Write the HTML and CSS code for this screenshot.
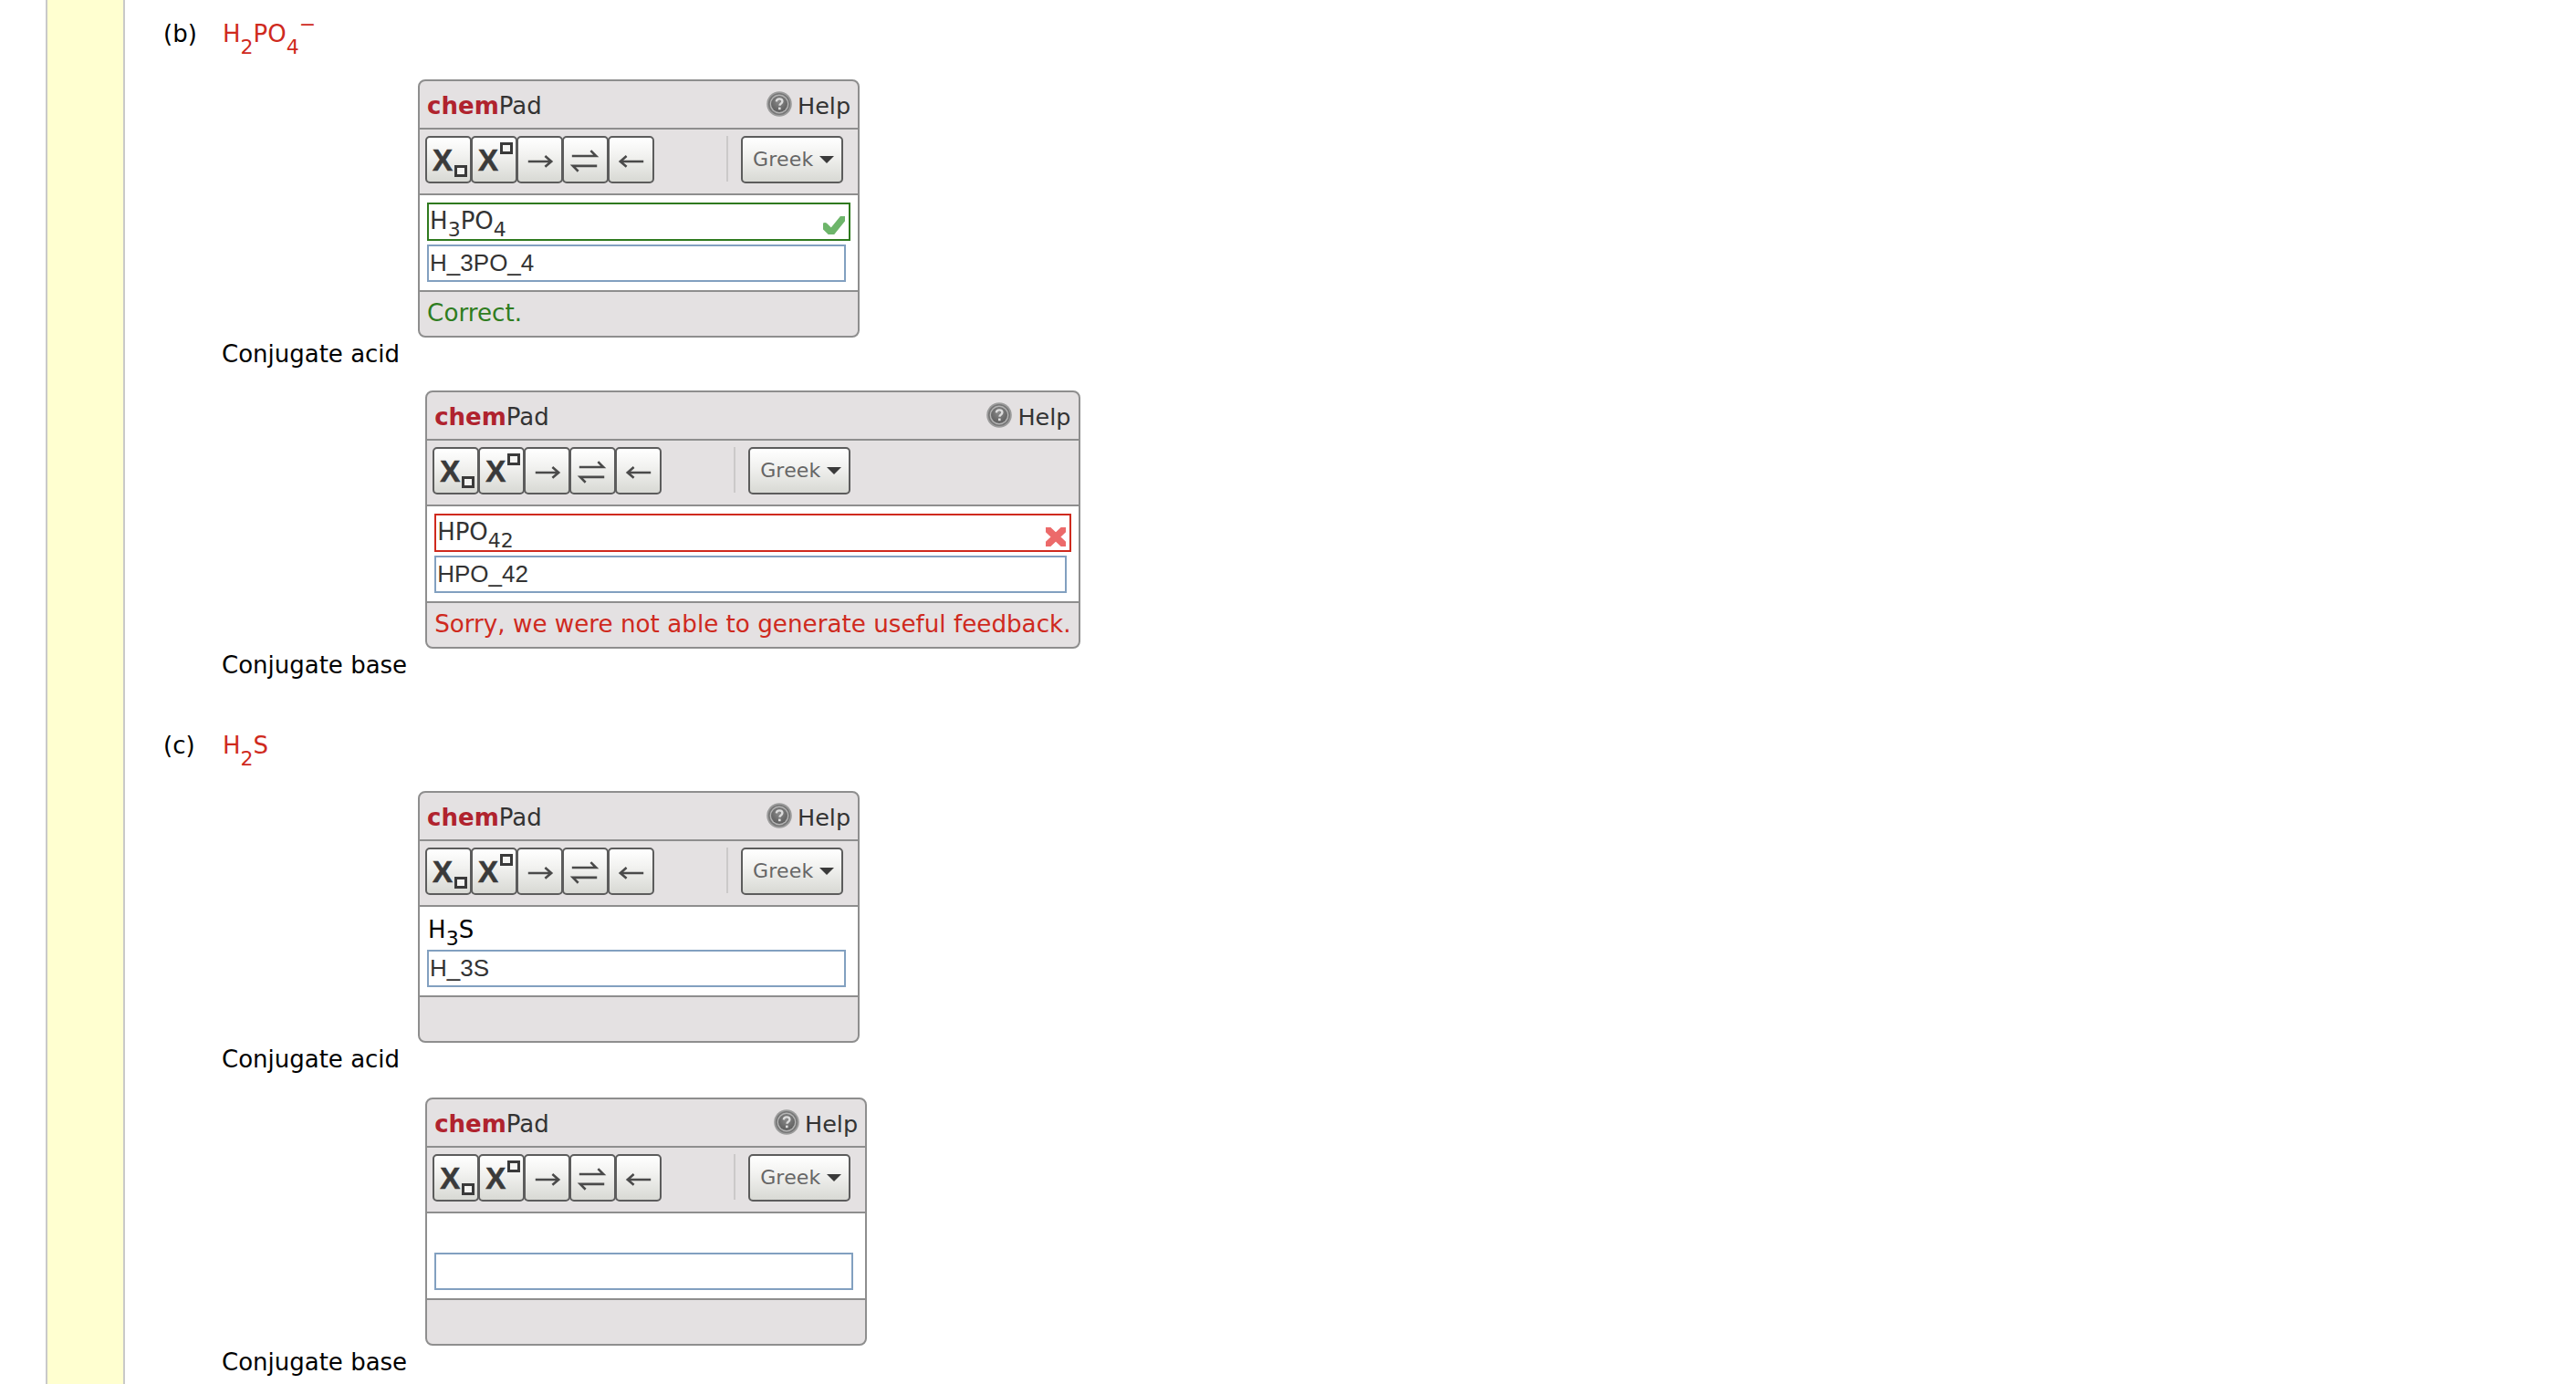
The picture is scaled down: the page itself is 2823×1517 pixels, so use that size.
FILE: index.html
```html
<!DOCTYPE html>
<html lang="en">
<head>
<meta charset="utf-8">
<title>chemPad</title>
<link rel="stylesheet" href="styles.css">
</head>
<body>
<svg class="defs" width="0" height="0" aria-hidden="true">
  <defs>
    <radialGradient id="helpFill" cx="50%" cy="35%" r="70%">
      <stop offset="0" stop-color="#8a8a8a"/>
      <stop offset="1" stop-color="#5a5a5a"/>
    </radialGradient>
    <filter id="soft" x="-10%" y="-10%" width="120%" height="120%">
      <feGaussianBlur stdDeviation="0.6"/>
    </filter>
    <symbol id="help" viewBox="0 0 28 28">
      <g filter="url(#soft)">
        <circle cx="14" cy="14" r="13.800" fill="#9c9c9c"/>
        <circle cx="14" cy="14" r="12" fill="#777"/>
        <circle cx="14" cy="14" r="10.400" fill="#b4b4b4"/>
        <circle cx="14" cy="14" r="9" fill="url(#helpFill)"/>
        <path d="M10.800 11.400c.2-2 1.500-3 3.400-3 1.900 0 3.200 1.100 3.200 2.700 0 1.300-.8 2-1.700 2.600-.8.5-1.200 1-1.200 2" fill="none" stroke="#dcdcdc" stroke-width="2.400"/>
        <rect x="13" y="17.600" width="2.600" height="2.600" fill="#dcdcdc"/>
      </g>
    </symbol>
    <symbol id="right" viewBox="0 0 48 48">
      <path d="M11 26h26M30 20l7 6-7 6" fill="none" stroke="#4a4a4a" stroke-width="2.600"/>
    </symbol>
    <symbol id="left" viewBox="0 0 48 48">
      <path d="M38 26H12M19 20l-7 6 7 6" fill="none" stroke="#4a4a4a" stroke-width="2.600"/>
    </symbol>
    <symbol id="both" viewBox="0 0 48 48">
      <path d="M9 20h27l-6-6M37 31H10l6 6" fill="none" stroke="#4a4a4a" stroke-width="2.600"/>
    </symbol>
    <symbol id="check" viewBox="0 0 30 26">
      <path d="M5 14l7 7L25 5" fill="none" stroke="#6db56a" stroke-width="7.500" stroke-linecap="round" filter="url(#soft)"/>
    </symbol>
    <symbol id="cross" viewBox="0 0 30 27">
      <path d="M6 5l18 17M24 5L6 22" fill="none" stroke="#ec6a6a" stroke-width="7.500" stroke-linecap="round" filter="url(#soft)"/>
    </symbol>
  </defs>
</svg>
<div class="page">
  <div class="margin-bar"></div>
  <main class="content">

    <section class="part part-b">
      <div class="part-head">
        <span class="part-tag">(b)</span>
        <span class="formula">H<span class="sub">2</span>PO<span class="sub">4</span><span class="sup">−</span></span>
      </div>

      <div class="answer">
        <span class="answer-label">Conjugate acid</span>
        <div class="pad">
          <div class="pad-head"><span class="brand"><b>chem</b>Pad</span><span class="help"><svg class="help-icon"><use href="#help"/></svg>Help</span></div>
          <div class="pad-tools">
            <button class="tool"><span class="tool-x">X</span><span class="box box-low"></span></button><button class="tool"><span class="tool-x">X</span><span class="box box-high"></span></button><button class="tool"><svg class="arrow"><use href="#right"/></svg></button><button class="tool"><svg class="arrow"><use href="#both"/></svg></button><button class="tool"><svg class="arrow"><use href="#left"/></svg></button>
            <span class="divider"></span>
            <button class="greek">Greek<span class="caret"></span></button>
          </div>
          <div class="pad-body">
            <div class="preview preview-ok">H<span class="sub-s">3</span>PO<span class="sub-s">4</span><svg class="mark mark-ok"><use href="#check"/></svg></div>
            <input class="entry" value="H_3PO_4">
          </div>
          <div class="pad-foot foot-ok">Correct.</div>
        </div>
      </div>

      <div class="answer answer-next">
        <span class="answer-label">Conjugate base</span>
        <div class="pad">
          <div class="pad-head"><span class="brand"><b>chem</b>Pad</span><span class="help"><svg class="help-icon"><use href="#help"/></svg>Help</span></div>
          <div class="pad-tools">
            <button class="tool"><span class="tool-x">X</span><span class="box box-low"></span></button><button class="tool"><span class="tool-x">X</span><span class="box box-high"></span></button><button class="tool"><svg class="arrow"><use href="#right"/></svg></button><button class="tool"><svg class="arrow"><use href="#both"/></svg></button><button class="tool"><svg class="arrow"><use href="#left"/></svg></button>
            <span class="divider"></span>
            <button class="greek">Greek<span class="caret"></span></button>
          </div>
          <div class="pad-body">
            <div class="preview preview-bad">HPO<span class="sub-s">42</span><svg class="mark mark-bad"><use href="#cross"/></svg></div>
            <input class="entry" value="HPO_42">
          </div>
          <div class="pad-foot foot-bad">Sorry, we were not able to generate useful feedback.</div>
        </div>
      </div>
    </section>

    <section class="part part-c">
      <div class="part-head">
        <span class="part-tag">(c)</span>
        <span class="formula">H<span class="sub">2</span>S</span>
      </div>

      <div class="answer">
        <span class="answer-label">Conjugate acid</span>
        <div class="pad">
          <div class="pad-head"><span class="brand"><b>chem</b>Pad</span><span class="help"><svg class="help-icon"><use href="#help"/></svg>Help</span></div>
          <div class="pad-tools">
            <button class="tool"><span class="tool-x">X</span><span class="box box-low"></span></button><button class="tool"><span class="tool-x">X</span><span class="box box-high"></span></button><button class="tool"><svg class="arrow"><use href="#right"/></svg></button><button class="tool"><svg class="arrow"><use href="#both"/></svg></button><button class="tool"><svg class="arrow"><use href="#left"/></svg></button>
            <span class="divider"></span>
            <button class="greek">Greek<span class="caret"></span></button>
          </div>
          <div class="pad-body">
            <div class="preview preview-plain">H<span class="sub-s">3</span>S</div>
            <input class="entry" value="H_3S">
          </div>
          <div class="pad-foot"></div>
        </div>
      </div>

      <div class="answer answer-last">
        <span class="answer-label">Conjugate base</span>
        <div class="pad">
          <div class="pad-head"><span class="brand"><b>chem</b>Pad</span><span class="help"><svg class="help-icon"><use href="#help"/></svg>Help</span></div>
          <div class="pad-tools">
            <button class="tool"><span class="tool-x">X</span><span class="box box-low"></span></button><button class="tool"><span class="tool-x">X</span><span class="box box-high"></span></button><button class="tool"><svg class="arrow"><use href="#right"/></svg></button><button class="tool"><svg class="arrow"><use href="#both"/></svg></button><button class="tool"><svg class="arrow"><use href="#left"/></svg></button>
            <span class="divider"></span>
            <button class="greek">Greek<span class="caret"></span></button>
          </div>
          <div class="pad-body">
            <div class="preview preview-empty"></div>
            <input class="entry" value="">
          </div>
          <div class="pad-foot"></div>
        </div>
      </div>
    </section>

  </main>
</div>
</body>
</html>
```

FILE: styles.css
```css
* { box-sizing: border-box; }

html, body {
  margin: 0;
  height: 100%;
  overflow: hidden;
  background: #fff;
}

body {
  font-family: "DejaVu Sans", Verdana, sans-serif;
  font-size: 26px;
  line-height: 30px;
  color: #000;
}

.defs { position: absolute; }

.page {
  display: flex;
  height: 100%;
  padding-left: 50px;
}

.margin-bar {
  flex: none;
  width: 87px;
  background: #ffffd0;
  border-left: 2px solid #c9c9c9;
  border-right: 2px solid #c9c9c9;
}

.content {
  flex: 1;
  padding-left: 42px;
}

.part-b { padding-top: 22px; }
.part-c { padding-top: 58px; }

.part-head {
  display: flex;
  height: 30px;
  margin-bottom: 35px;
}

.part-tag { width: 65px; }

.formula {
  color: #cf2a1e;
  white-space: nowrap;
}

.sub {
  font-size: 22px;
  line-height: 0;
  vertical-align: -13px;
}

.sup {
  font-size: 22px;
  line-height: 0;
  vertical-align: 12px;
}

.answer {
  display: flex;
  align-items: flex-end;
  gap: 20px;
  margin-left: 64px;
}

.answer-next { margin-top: 25px; }
.answer-last { margin-top: 27px; }

.answer-label { white-space: nowrap; }

.pad {
  flex: none;
  min-width: 484px;
  margin-bottom: 33px;
  background: #e4e1e2;
  border: 2px solid #8e8e8e;
  border-radius: 8px;
  color: #333;
}

.pad-head {
  display: flex;
  justify-content: space-between;
  align-items: center;
  height: 53px;
  padding: 2px 8px 0;
  border-bottom: 2px solid #8e8e8e;
}

.brand { font-size: 26px; }

.brand b { color: #b0232e; }

.help {
  display: flex;
  align-items: center;
  gap: 6px;
  font-size: 25.500px;
}

.help-icon {
  width: 28px;
  height: 28px;
  margin-top: -3px;
}

.pad-tools {
  display: flex;
  align-items: flex-start;
  height: 72px;
  padding: 7px 0 0 6px;
  border-bottom: 2px solid #8e8e8e;
}

.tool,
.greek {
  display: block;
  position: relative;
  height: 52px;
  margin: 0;
  padding: 0;
  background: linear-gradient(#ffffff, #f2f2f0 40%, #d8d9d4);
  border: 2px solid #5c5c5c;
  border-radius: 5px;
}

.tool {
  flex: none;
  width: 51px;
  margin-right: -1px;
}

.tool-x {
  position: absolute;
  left: 6px;
  top: 6px;
  font-family: "Liberation Sans", Arial, sans-serif;
  font-size: 33px;
  font-weight: 700;
  line-height: 38px;
  color: #3a3a3a;
  -webkit-text-stroke: 0.6px #3a3a3a;
}

.box {
  position: absolute;
  width: 14px;
  height: 13px;
  border: 3px solid #3a3a3a;
  background: #f4f4f2;
}

.box-low { right: 3px; bottom: 5px; }
.box-high { right: 3px; top: 5px; }

.arrow {
  display: block;
  width: 47px;
  height: 48px;
}

.divider {
  flex: none;
  width: 2px;
  height: 50px;
  margin-left: 80px;
  background: #cbc9c9;
}

.greek {
  flex: none;
  display: flex;
  align-items: center;
  gap: 6px;
  width: 112px;
  margin-left: 14px;
  padding: 0 0 2px 11px;
  font-family: "DejaVu Sans", sans-serif;
  font-size: 22px;
  letter-spacing: 0.2px;
  color: #666;
}

.caret {
  margin-top: 2px;
  border-left: 8px solid transparent;
  border-right: 8px solid transparent;
  border-top: 8px solid #3a3a3a;
}

.pad-body {
  padding: 8px 8px 9px;
  background: #fff;
  border-bottom: 2px solid #8e8e8e;
}

.preview {
  position: relative;
  height: 42px;
  margin-bottom: 4px;
  line-height: 36px;
  white-space: nowrap;
}

.preview-ok { border: 2px solid #2f7a1f; padding-left: 1px; }
.preview-bad { border: 2px solid #cf2a1e; padding-left: 1px; }

.preview-plain {
  height: 36px;
  margin-bottom: 3px;
  color: #000;
  line-height: 35px;
  padding-left: 1px;
}

.preview-empty {
  height: 35px;
  margin-bottom: 0;
}

.sub-s {
  font-size: 22px;
  line-height: 0;
  vertical-align: -8px;
}

.mark {
  position: absolute;
  top: 10px;
}

.mark-ok { right: 1px; width: 30px; height: 26px; }
.mark-bad { right: 0; width: 30px; height: 27px; }

.entry {
  display: block;
  width: calc(100% - 5px);
  height: 41px;
  margin: 0;
  padding: 0 1px;
  font-family: "Liberation Sans", Arial, sans-serif;
  font-size: 26px;
  color: #333;
  background: #fff;
  border: 2px solid #82a0c0;
  border-radius: 0;
  outline: none;
}

.pad-foot {
  height: 48px;
  padding: 8px 8px 0;
  white-space: nowrap;
  font-size: 26.200px;
}

.foot-ok { color: #2f7d1f; }
.foot-bad { color: #cf2a1e; }
```
